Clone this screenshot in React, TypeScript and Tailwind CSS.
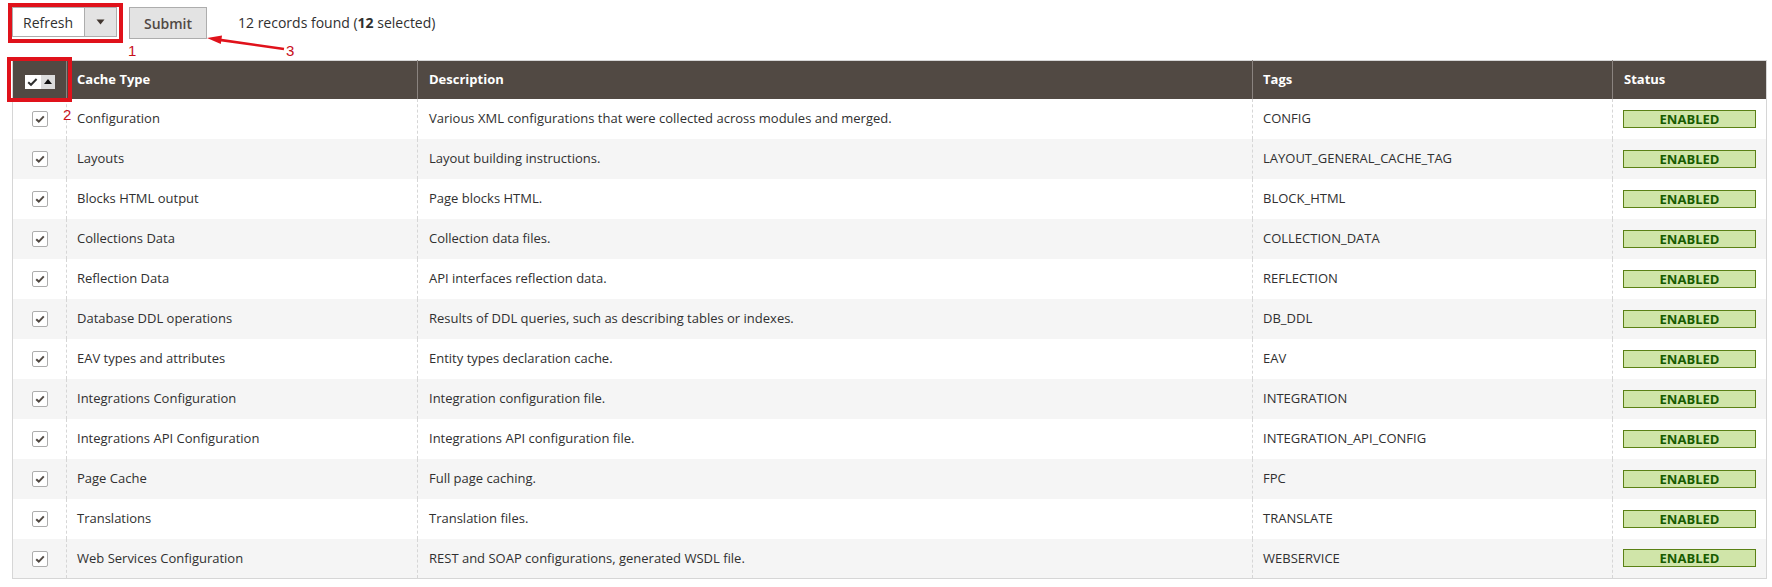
import React from "react";

const rows: [string, string, string][] = [
  ["Configuration", "Various XML configurations that were collected across modules and merged.", "CONFIG"],
  ["Layouts", "Layout building instructions.", "LAYOUT_GENERAL_CACHE_TAG"],
  ["Blocks HTML output", "Page blocks HTML.", "BLOCK_HTML"],
  ["Collections Data", "Collection data files.", "COLLECTION_DATA"],
  ["Reflection Data", "API interfaces reflection data.", "REFLECTION"],
  ["Database DDL operations", "Results of DDL queries, such as describing tables or indexes.", "DB_DDL"],
  ["EAV types and attributes", "Entity types declaration cache.", "EAV"],
  ["Integrations Configuration", "Integration configuration file.", "INTEGRATION"],
  ["Integrations API Configuration", "Integrations API configuration file.", "INTEGRATION_API_CONFIG"],
  ["Page Cache", "Full page caching.", "FPC"],
  ["Translations", "Translation files.", "TRANSLATE"],
  ["Web Services Configuration", "REST and SOAP configurations, generated WSDL file.", "WEBSERVICE"],
];

function Check() {
  return (
    <span className="inline-flex w-[16px] h-[16px] items-center justify-center rounded-[2px] border border-[#adadad] bg-white align-middle">
      <svg width="12" height="12" viewBox="0 0 12 12">
        <path d="M2.2 6.2 L4.8 8.6 L9.8 3.4" fill="none" stroke="#514943" strokeWidth="2" />
      </svg>
    </span>
  );
}

export default function App() {
  return (
    <div className="relative w-[1772px] h-[587px] overflow-hidden bg-white font-['Open_Sans',sans-serif] text-[#303030]">
      <div className="pl-[12px] pr-[6px] pt-[7px]">
        <div className="flex items-start h-[32px]">
          <div className="flex h-[30px] w-[105px] border border-[#adadad] bg-white">
            <div className="flex-1 flex items-center pl-[10px] text-[14px] text-[#303030]">Refresh</div>
            <div className="w-[32px] flex items-center justify-center border-l border-[#adadad] bg-[#e3e3e3]">
              <svg width="9" height="6" viewBox="0 0 9 6">
                <path d="M0.5 0.5 L8.5 0.5 L4.5 5.5 Z" fill="#41362f" />
              </svg>
            </div>
          </div>
          <button className="ml-[12px] h-[32px] w-[78px] border border-[#adadad] bg-[#e3e3e3] text-[14px] font-semibold text-[#514943]">
            Submit
          </button>
          <div className="ml-[31px] h-[30px] flex items-center text-[14px] text-[#303030]">
            12 records found (<span className="font-bold">12</span>&nbsp;selected)
          </div>
        </div>

        <table className="mt-[21px] w-[1754px] table-fixed border-collapse border border-[#d6d6d6] text-[13px]">
          <colgroup>
            <col className="w-[54px]" />
            <col className="w-[351px]" />
            <col className="w-[835px]" />
            <col className="w-[360px]" />
            <col className="w-[154px]" />
          </colgroup>
          <thead>
            <tr className="h-[38px] bg-[#514943] text-white">
              <th className="p-0 align-middle">
                <div className="flex justify-center pt-[4px]">
                  <div className="flex h-[14px]">
                    <div className="w-[16px] bg-white flex items-center justify-center">
                      <svg width="11" height="10" viewBox="0 0 11 10">
                        <path d="M1.2 5.2 L4 7.8 L9.6 2" fill="none" stroke="#303030" strokeWidth="2" />
                      </svg>
                    </div>
                    <div className="w-[14px] bg-[#dcdcdc] flex items-center justify-center">
                      <svg width="8" height="5" viewBox="0 0 8 5">
                        <path d="M0 5 L8 5 L4 0 Z" fill="#111" />
                      </svg>
                    </div>
                  </div>
                </div>
              </th>
              <th className="px-[10px] text-left font-bold border-l border-[#8a837f]">Cache Type</th>
              <th className="px-[11px] text-left font-bold border-l border-[#8a837f]">Description</th>
              <th className="px-[10px] text-left font-bold border-l border-[#8a837f]">Tags</th>
              <th className="px-[11px] text-left font-bold border-l border-[#8a837f]">Status</th>
            </tr>
          </thead>
          <tbody>
            {rows.map((r, i) => (
              <tr key={r[0]} className={i % 2 === 1 ? "h-[40px] bg-[#f5f5f5]" : "h-[40px] bg-white"}>
                <td className="p-0 text-center align-middle">
                  <Check />
                </td>
                <td className="px-[10px] align-middle border-l border-dashed border-[#d6d6d6]">{r[0]}</td>
                <td className="px-[11px] align-middle border-l border-dashed border-[#d6d6d6]">{r[1]}</td>
                <td className="px-[10px] align-middle border-l border-dashed border-[#d6d6d6]">{r[2]}</td>
                <td className="px-[10px] align-middle border-l border-dashed border-[#d6d6d6]">
                  <div className="w-[133px] h-[18px] border border-[#5b8116] bg-[#d0e5a9] text-center text-[13px] leading-[16px] font-bold text-[#185b00]">
                    ENABLED
                  </div>
                </td>
              </tr>
            ))}
          </tbody>
        </table>
      </div>

      {/* annotations */}
      <div className="absolute left-[8px] top-[3px] w-[115px] h-[40px] border-[4px] border-[#e0121b]" />
      <div className="absolute left-[7px] top-[57px] w-[65px] h-[45px] border-[4px] border-[#e0121b]" />
      <div className="absolute left-[128px] top-[42px] text-[15px] leading-[18px] text-[#c8101a] font-['Liberation_Sans',sans-serif]">1</div>
      <div className="absolute left-[63px] top-[106px] text-[15px] leading-[18px] text-[#c8101a] font-['Liberation_Sans',sans-serif]">2</div>
      <div className="absolute left-[286px] top-[42px] text-[15px] leading-[18px] text-[#c8101a] font-['Liberation_Sans',sans-serif]">3</div>
      <svg className="absolute left-0 top-0 pointer-events-none" width="1772" height="587">
        <line x1="284" y1="49" x2="218" y2="39.6" stroke="#e0121b" strokeWidth="2.6" />
        <polygon points="207,38 222,35.5 220.8,44" fill="#e0121b" />
      </svg>
    </div>
  );
}
